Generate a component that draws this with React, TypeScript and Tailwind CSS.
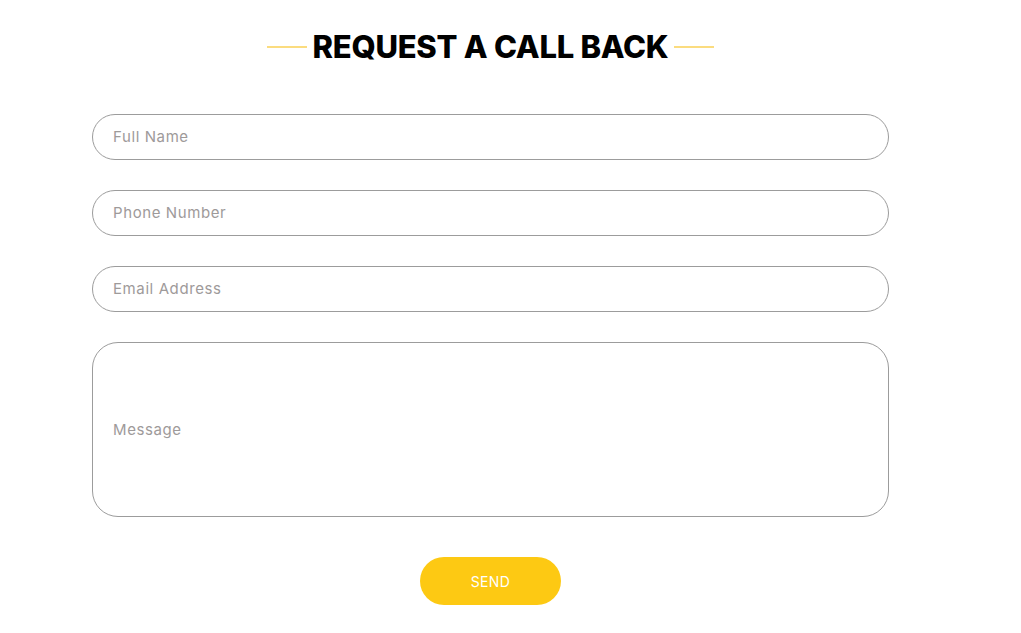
export default function App() {
  const fields = ["Full Name", "Phone Number", "Email Address"];
  return (
    <div className="min-h-[633px] bg-white font-['Inter',sans-serif]">
      <div className="ml-[92px] w-[797px] pt-[28px]">
        <div className="flex items-center justify-center gap-[5px]">
          <span className="h-[2px] w-[40px] bg-[#fbdc7f]" />
          <h2 className="text-[31px] font-extrabold leading-[38px] tracking-[-0.25px] text-black">
            REQUEST A CALL BACK
          </h2>
          <span className="h-[2px] w-[40px] bg-[#fbdc7f]" />
        </div>

        <form className="mt-[48px] flex flex-col gap-[30px]">
          {fields.map((f) => (
            <input
              key={f}
              type="text"
              placeholder={f}
              className="h-[46px] w-full rounded-full border border-[#9c9c9c] px-[20px] pb-[1px] text-[15px] tracking-[0.6px] text-[#555] placeholder:text-[#9e9a9a] outline-none"
            />
          ))}
          <div className="flex h-[175px] w-full items-center rounded-[26px] border border-[#9c9c9c] px-[20px] pt-[2px]">
            <span className="text-[15px] tracking-[0.6px] text-[#9e9a9a]">Message</span>
          </div>
          <div className="mt-[10px] flex justify-center">
            <button
              type="button"
              className="h-[48px] w-[141px] rounded-full bg-[#fdc913] text-[14px] tracking-[0.4px] text-white"
            >
              SEND
            </button>
          </div>
        </form>
      </div>
    </div>
  );
}
